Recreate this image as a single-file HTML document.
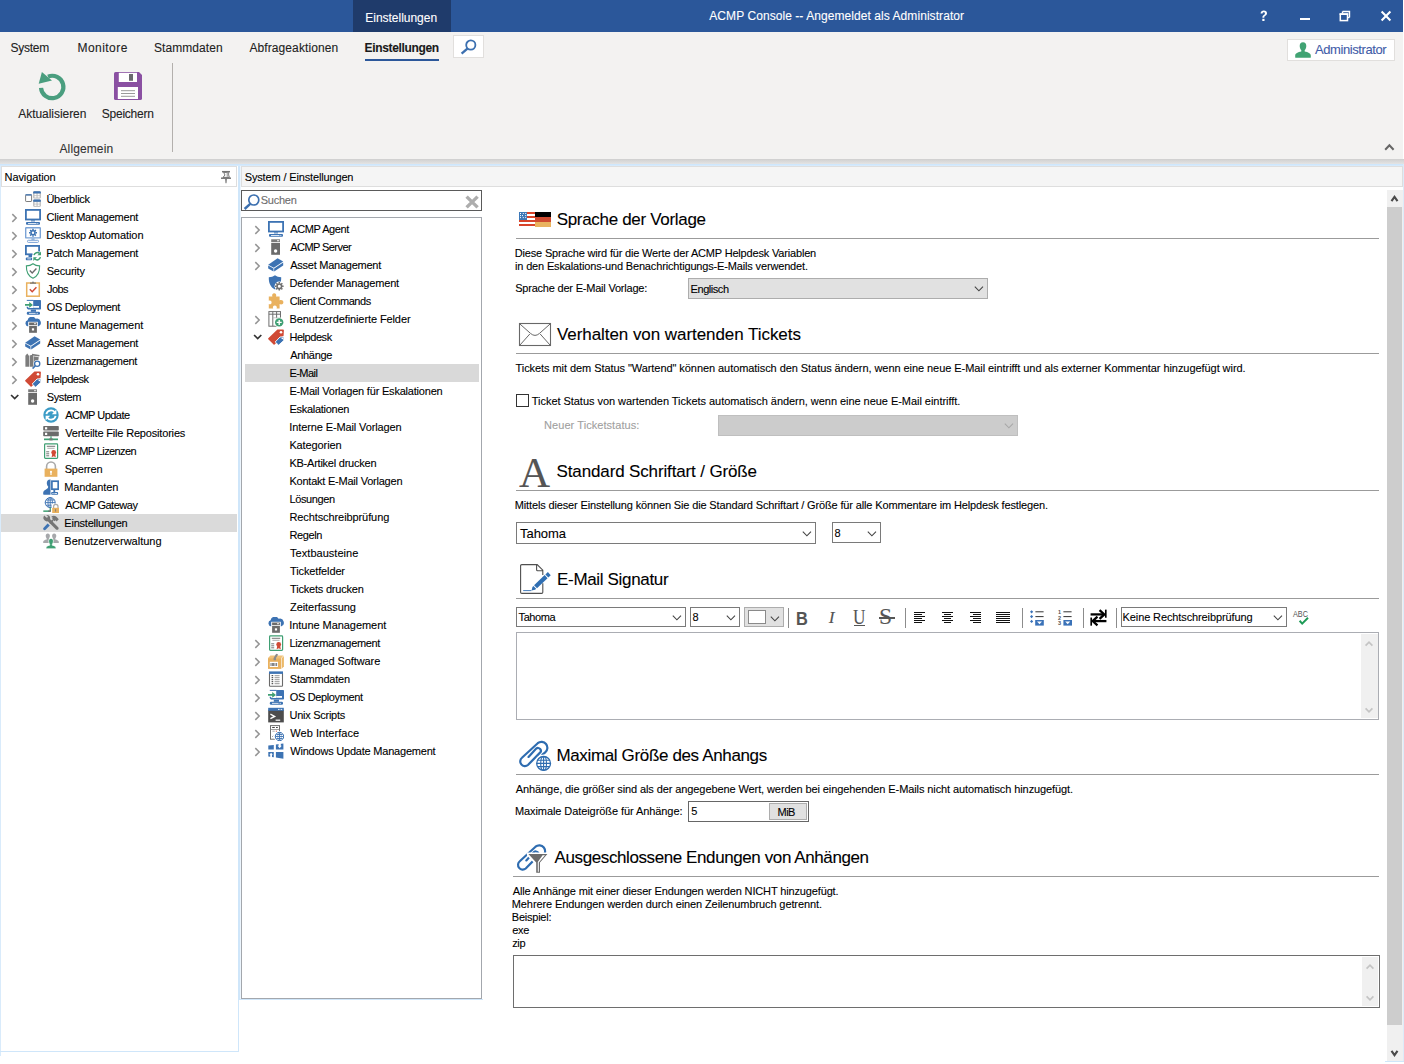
<!DOCTYPE html>
<html lang="de">
<head>
<meta charset="utf-8">
<title>ACMP Console -- Angemeldet als Administrator</title>
<style>
*{box-sizing:border-box;margin:0;padding:0}
html,body{width:1404px;height:1064px;overflow:hidden;background:#fff}
body{font-family:"Liberation Sans",sans-serif;font-size:11px;color:#000;position:relative}
.a{position:absolute}
.t{position:absolute;white-space:pre;-webkit-text-stroke:0.1px}
svg{position:absolute;overflow:visible}
.i{width:16px;height:16px}
.hr{position:absolute;height:1px;background:#9b9b9b}
.cb{position:absolute;border:1px solid #7a7a7a;background:#fff}
.sep{position:absolute;width:1px;background:#8c8c8c}
</style>
</head>
<body>
<svg width="0" height="0" style="left:0;top:0"><defs>
<symbol id="chr" viewBox="0 0 7 10"><path d="M1.3 1.1 L5.2 5 L1.3 8.9" fill="none" stroke="#949494" stroke-width="1.5"/></symbol>
<symbol id="chd" viewBox="0 0 10 7"><path d="M1.1 1 L4.7 4.6 L8.3 1" fill="none" stroke="#333" stroke-width="1.7"/></symbol>
<symbol id="overview" viewBox="0 0 16 16"><rect x="0.6" y="3.9" width="6" height="6.6" rx="0.6" fill="#fff" stroke="#7d7d7d" stroke-width="1"/><rect x="0.3" y="3.3" width="6.6" height="1.3" rx="0.5" fill="#3d73b3"/><rect x="8.2" y="0.2" width="7.6" height="7.4" rx="1" fill="#b4b4b4"/><path d="M8.2 2.4V1.2Q8.2 0.2 9.2 0.2H14.8Q15.8 0.2 15.8 1.2V2.4Z" fill="#3d73b3"/><rect x="9.4" y="2.7" width="2.2" height="1.7" fill="#fff"/><rect x="12.5" y="2.7" width="2.2" height="1.7" fill="#fff"/><rect x="9.4" y="5.1" width="2.2" height="1.5" fill="#fff"/><rect x="12.5" y="5.1" width="2.2" height="1.5" fill="#fff"/><rect x="8.2" y="8.6" width="7.6" height="7.2" rx="1" fill="#b4b4b4"/><path d="M8.2 10.8V9.6Q8.2 8.6 9.2 8.6H14.8Q15.8 8.6 15.8 9.6V10.8Z" fill="#3d73b3"/><rect x="9.4" y="11.1" width="2.2" height="1.6" fill="#fff"/><rect x="12.5" y="11.1" width="2.2" height="1.6" fill="#fff"/><rect x="9.4" y="13.4" width="2.2" height="1.5" fill="#fff"/><rect x="12.5" y="13.4" width="2.2" height="1.5" fill="#fff"/></symbol>
<symbol id="monitor" viewBox="0 0 16 16"><rect x="0.9" y="0.9" width="14.2" height="9.6" fill="#fff" stroke="#3d73b3" stroke-width="1.8"/><path d="M6 11.4h4v1H6z" fill="#3d73b3"/><rect x="1" y="13.1" width="14" height="2.6" rx="0.9" fill="#3d73b3"/><rect x="3" y="14" width="8.5" height="0.8" fill="#fff"/><rect x="12.3" y="14" width="1" height="0.8" fill="#fff"/></symbol>
<symbol id="deskauto" viewBox="0 0 16 16"><rect x="0.7" y="0.7" width="14.6" height="10.2" rx="0.5" fill="#fff" stroke="#7ba3d6" stroke-width="1.4"/><path d="M6.4 11.4h3.2v1.4h-3.2z" fill="#7ba3d6"/><rect x="2.5" y="13.3" width="11" height="2.1" rx="0.8" fill="#fff" stroke="#7ba3d6" stroke-width="1"/><g transform="translate(8 5.8)"><circle r="2.7" fill="#3d73b3"/><g stroke="#3d73b3" stroke-width="1.5"><path d="M0 -4V-2.4M0 4V2.4M-4 0H-2.4M4 0H2.4M-2.85 -2.85L-1.7 -1.7M2.85 2.85L1.7 1.7M-2.85 2.85L-1.7 1.7M2.85 -2.85L1.7 -1.7"/></g><circle r="1.2" fill="#fff"/></g></symbol>
<symbol id="patch" viewBox="0 0 16 16"><rect x="0.9" y="0.9" width="13.2" height="8.4" fill="#fff" stroke="#3d73b3" stroke-width="1.8"/><path d="M3.5 10h3.5v2H3.5z" fill="#3d73b3"/><rect x="0.8" y="12.6" width="6.4" height="2.6" rx="0.8" fill="#3d73b3"/><rect x="2.3" y="13.5" width="3.6" height="0.8" fill="#fff"/><rect x="7.5" y="6.5" width="8.5" height="9.5" fill="#fff"/><path d="M9 10.2A3.4 3.4 0 0 1 14.6 8.4" fill="none" stroke="#3f9f73" stroke-width="1.5"/><path d="M16 6.6V10.2H12.4z" fill="#3f9f73"/><path d="M15.4 12.2A3.4 3.4 0 0 1 9.8 14" fill="none" stroke="#3f9f73" stroke-width="1.5"/><path d="M8.3 15.9V12.2H12z" fill="#3f9f73"/></symbol>
<symbol id="shield" viewBox="0 0 16 16"><path d="M8 0.8C6.2 2.2 3.8 2.9 1.4 2.9C1.2 8.5 3.2 13 8 15.2C12.8 13 14.8 8.5 14.6 2.9C12.2 2.9 9.8 2.2 8 0.8Z" fill="#fff" stroke="#3f9f73" stroke-width="1.1"/><path d="M4.8 7.6L7.2 10L11.4 5.6" fill="none" stroke="#6a6a6a" stroke-width="1.4"/></symbol>
<symbol id="jobs" viewBox="0 0 16 16"><rect x="1.7" y="2" width="12.6" height="13.2" fill="#fff" stroke="#e9b15e" stroke-width="1.5"/><path d="M5 2.8V1.4H6.8L8 0.2L9.2 1.4H11V2.8Z" fill="#7a7a7a"/><path d="M4.8 8.3L7.2 10.7L11.4 6.2" fill="none" stroke="#d04a35" stroke-width="1.5"/></symbol>
<symbol id="osdeploy" viewBox="0 0 16 16"><path d="M8.2 0.9H15.2Q16 0.9 16 1.7V9.8Q16 10.6 15.2 10.6H4.2Q1.6 10.6 1.6 7.8H2.8Q2.8 8.9 4.2 8.9H8.2Z" fill="#3d73b3"/><path d="M1.8 1.4H8.4" stroke="#3d73b3" stroke-width="1"/><rect x="8.2" y="7" width="5.8" height="1.8" fill="#fff"/><path d="M0 5H4.2V3L8 5.9L4.2 8.8V6.8H0Z" fill="#3f9f73"/><path d="M5.8 10.6h5.2v2.2h-5.2z" fill="#3d73b3"/><rect x="1.8" y="12.7" width="13.2" height="3.1" rx="1.2" fill="#3d73b3"/><rect x="4" y="13.9" width="6.6" height="0.8" fill="#fff"/><rect x="11.6" y="13.9" width="1.2" height="0.8" fill="#fff"/></symbol>
<symbol id="intune" viewBox="0 0 16 16"><path d="M3.3 9.5A3.2 3.2 0 0 1 2.6 3.3A4.3 4.3 0 0 1 10.6 1.8A3.9 3.9 0 0 1 13 9.5Z" fill="#3d73b3"/><rect x="3.2" y="4.8" width="9.6" height="11.2" fill="#fff"/><rect x="4.1" y="5.5" width="7.8" height="2.5" fill="#6b6b6b"/><rect x="9" y="6.3" width="2" height="0.9" fill="#fff"/><rect x="4.1" y="8.8" width="7.8" height="7" fill="#6b6b6b"/><rect x="6.9" y="11.3" width="2.2" height="2.2" fill="#fff"/></symbol>
<symbol id="asset" viewBox="0 0 16 16"><path d="M0.2 7.8L9.6 1.2L15.2 4.6L5.8 10.8Z" fill="#3d73b3"/><path d="M0.2 8.5L5.5 11.5V14.4L0.2 11.4Z" fill="#3d73b3"/><path d="M6.2 11.5L15.2 5.4V8.6L6.2 14.4Z" fill="#3d73b3"/></symbol>
<symbol id="lizenzmgmt" viewBox="0 0 16 16"><path d="M0.4 2.8L2.2 0.6L4 2.8V13.8H0.4Z" fill="#7c7c7c"/><path d="M4.6 2.4L8.2 1.4V13.8H4.6Z" fill="#7c7c7c"/><path d="M7 0.7L14.6 2.1L14.2 3.5L7 2.4ZM8.6 3.2L13.8 4.2L13 9L9.4 13.8H8.6Z" fill="#7c7c7c"/><circle cx="12.2" cy="10.7" r="3.6" fill="#fff"/><circle cx="12.2" cy="10.7" r="2.6" fill="#fff" stroke="#3d73b3" stroke-width="1.3"/><path d="M10.3 12.7L7.6 15.6" stroke="#3d73b3" stroke-width="1.6"/></symbol>
<symbol id="helpdesk" viewBox="0 0 16 16"><path d="M0.3 9.3L9.4 0.6L15 0.4C15.6 0.4 15.9 0.7 15.9 1.3L15.6 6.7L6.6 15.4C6.3 15.7 5.9 15.7 5.6 15.4L0.3 10.2C0 9.9 0 9.6 0.3 9.3Z" fill="#d04a35"/><circle cx="13" cy="3.2" r="1.3" fill="#fff"/><path d="M7.2 13L12 8L15.9 7.7L15.7 11.6L10.6 16.2L7.2 13Z" fill="#3d73b3" stroke="#fff" stroke-width="0.9"/><circle cx="14.3" cy="9.4" r="0.8" fill="#fff"/></symbol>
<symbol id="server" viewBox="0 0 16 16"><rect x="3.2" y="0.3" width="8.8" height="2.9" fill="#7a7a7a"/><rect x="9" y="1.3" width="2.2" height="0.9" fill="#fff"/><rect x="3.2" y="4" width="8.8" height="11.8" fill="#6b6b6b"/><circle cx="7.6" cy="12" r="1.7" fill="#fff"/></symbol>
<symbol id="update" viewBox="0 0 16 16"><circle cx="8" cy="8" r="7.7" fill="#3c9cc6"/><path d="M3.4 7.2A4.7 4.7 0 0 1 11.6 5" fill="none" stroke="#fff" stroke-width="1.8"/><path d="M13.4 2.6V7.2H8.8Z" fill="#fff"/><path d="M12.6 8.8A4.7 4.7 0 0 1 4.4 11" fill="none" stroke="#fff" stroke-width="1.8"/><path d="M2.6 13.4V8.8H7.2Z" fill="#fff"/></symbol>
<symbol id="filerepo" viewBox="0 0 16 16"><rect x="0.2" y="1" width="15.6" height="4.6" rx="0.8" fill="#6b6b6b"/><rect x="2" y="2.2" width="2.2" height="2.2" fill="#fff"/><rect x="0.2" y="6.6" width="15.6" height="4.6" rx="0.8" fill="#6b6b6b"/><rect x="2" y="7.8" width="2.2" height="2.2" fill="#fff"/><rect x="7.4" y="11.2" width="1.2" height="2.6" fill="#3f9f73"/><rect x="1" y="13.5" width="14" height="1.7" fill="#3f9f73"/><rect x="6.4" y="13.3" width="3.2" height="2.1" fill="#777"/></symbol>
<symbol id="cert" viewBox="0 0 16 16"><rect x="1.6" y="0.9" width="13" height="14.4" rx="0.8" fill="#fff" stroke="#3f9f73" stroke-width="1.2"/><path d="M3.8 3.3H12.2" stroke="#666" stroke-width="0.9"/><path d="M4.4 5.3H11.6" stroke="#999" stroke-width="0.8"/><path d="M3.2 8.8H6.2M3.2 10.8H6.2M3.2 12.8H6.2" stroke="#666" stroke-width="0.9"/><circle cx="10.7" cy="9.4" r="2.4" fill="#d04a35"/><path d="M9.2 11L8.6 14.2L10.7 13.2L12.8 14.2L12.2 11Z" fill="#d04a35"/></symbol>
<symbol id="lock" viewBox="0 0 16 16"><path d="M3.6 8V5.4A4.4 4.4 0 0 1 12.4 5.4V8" fill="none" stroke="#a9a9a9" stroke-width="1.6"/><rect x="1.6" y="7.6" width="12.8" height="8.2" fill="#e9b15e"/><circle cx="8" cy="10.8" r="1.1" fill="#fff"/><rect x="7.4" y="11" width="1.2" height="3" fill="#fff"/></symbol>
<symbol id="mandant" viewBox="0 0 16 16"><path d="M7.5 0.4C5 0.2 3.8 2 3.8 4C3.8 5.6 4.4 6.8 5.2 7.6C5.2 9 4.6 9.8 3 10.4C1 11.1 0.2 12.4 0.2 14V15.1Q0.2 15.7 0.8 15.7H7.5Z" fill="#3d73b3"/><rect x="8.9" y="2.2" width="6.3" height="8" fill="#fff" stroke="#3d73b3" stroke-width="1.7"/><path d="M10.4 11h1.8v2.2h-1.8z" fill="#3d73b3"/><rect x="8.2" y="13.1" width="6.9" height="2.6" rx="0.8" fill="#3d73b3"/><rect x="9.4" y="14" width="1.2" height="0.8" fill="#fff"/><rect x="11.4" y="14" width="2.6" height="0.8" fill="#fff"/></symbol>
<symbol id="gateway" viewBox="0 0 16 16"><circle cx="7.2" cy="5.6" r="5" fill="#fff" stroke="#3d73b3" stroke-width="1"/><ellipse cx="7.2" cy="5.6" rx="2.2" ry="5" fill="none" stroke="#3d73b3" stroke-width="0.9"/><path d="M7.2 0.6V10.6M2.2 5.6H12.2M3 3H11.4M3 8.2H11.4" stroke="#3d73b3" stroke-width="0.9" fill="none"/><rect x="6.6" y="10.6" width="1.3" height="3.4" fill="#3f9f73"/><rect x="0.3" y="13.4" width="6" height="1.5" fill="#3f9f73"/><rect x="5.4" y="13.4" width="2.5" height="1.5" fill="#666"/><rect x="8.6" y="6.6" width="7.4" height="9.4" fill="#fff"/><path d="M10.6 11V9.6A2.2 2.2 0 0 1 15 9.6V11" fill="none" stroke="#a9a9a9" stroke-width="1.2"/><rect x="9.2" y="10.8" width="6.8" height="5.2" fill="#e9b15e"/><rect x="12.2" y="12.2" width="0.9" height="2.4" fill="#7a7a7a"/></symbol>
<symbol id="tools" viewBox="0 0 16 16"><g fill="#757575"><path d="M8.6 1.2C10.4 0.2 12.2 0.6 13.4 1.8L15.8 4.2L13.6 6.4L12.4 5.2L11.4 6.2L9 3.8L10 2.8C9.6 2.4 9.2 2.2 8.6 2.2Z"/><path d="M9.2 4.6L11 6.4L4.4 13L2.6 11.2Z" fill="none"/><path d="M0.4 3.4C0.2 2.4 0.6 1.4 1.4 0.6L3.2 2.6L4.6 2.4L4.8 1L3.2 0.2C4.4 -0.2 5.6 0.2 6.4 1C7.2 1.8 7.4 3 7 4L15.2 12.2C15.8 12.8 15.8 13.8 15.2 14.4C14.6 15 13.6 15 13 14.4L4.8 6.2C3.8 6.6 2.6 6.4 1.8 5.6C1 4.8 0.6 4.2 0.4 3.4Z"/></g><path d="M9.4 4.6L10.6 5.8L7.4 9L6.2 7.8Z" fill="#757575"/><path d="M4.6 8.4L6.8 10.6L2.6 14.8C2 15.4 1 15.4 0.6 14.8C0 14.2 0 13.4 0.6 12.8Z" fill="#3d73b3"/></symbol>
<symbol id="users" viewBox="0 0 16 16"><g fill="#a6a8ab"><path d="M4.8 0.4C6.2 0.4 6.9 1.4 6.9 2.8C6.9 4 6.4 4.9 5.9 5.4V6.4C7.6 6.8 8.6 7.6 8.6 8.8V10H0.2V8.8C0.2 7.6 1.6 6.8 3.7 6.4V5.4C3.2 4.9 2.7 4 2.7 2.8C2.7 1.4 3.4 0.4 4.8 0.4Z"/><path d="M11.2 0.4C12.6 0.4 13.3 1.4 13.3 2.8C13.3 4 12.8 4.9 12.3 5.4V6.4C14.4 6.8 15.8 7.6 15.8 8.8V10H7.4V8.8C7.4 7.6 8.4 6.8 10.1 6.4V5.4C9.6 4.9 9.1 4 9.1 2.8C9.1 1.4 9.8 0.4 11.2 0.4Z"/></g><path d="M8 5.4C9.6 5.4 10.4 6.6 10.4 8.2C10.4 9.6 9.8 10.6 9.3 11.2V12.2C11.4 12.6 13 13.4 13 14.8V15.8H3V14.8C3 13.4 4.6 12.6 6.7 12.2V11.2C6.2 10.6 5.6 9.6 5.6 8.2C5.6 6.6 6.4 5.4 8 5.4Z" fill="#3f9f73" stroke="#fff" stroke-width="0.7"/></symbol>
<symbol id="defender" viewBox="0 0 16 16"><path d="M7 0.3C5.4 1.6 3.2 2.3 0.8 2.3C0.6 7.8 2.4 12.2 7 14.6C11.6 12.2 13.4 7.8 13.2 2.3C10.8 2.3 8.6 1.6 7 0.3Z" fill="#3d73b3"/><circle cx="11.3" cy="11.3" r="4.7" fill="#fff"/><g transform="translate(11.3 11.3)"><circle r="2.3" fill="none" stroke="#6e6e6e" stroke-width="1.6"/><g stroke="#6e6e6e" stroke-width="1.5"><path d="M0 -4.3V-2.8M0 4.3V2.8M-4.3 0H-2.8M4.3 0H2.8M-3.05 -3.05L-2 -2M3.05 3.05L2 2M-3.05 3.05L-2 2M3.05 -3.05L2 -2"/></g></g></symbol>
<symbol id="puzzle" viewBox="0 0 16 16"><path d="M4.4 3.6C3.6 2 4.6 0.3 6.2 0.3C7.8 0.3 8.8 2 8 3.6H11.6V7.4C13.2 6.4 15.4 7.2 15.4 9.2C15.4 11.2 13.2 12 11.6 11V15.4H8.6C9.4 13.8 8.4 12.4 6.8 12.4C5.2 12.4 4.4 13.8 5.2 15.4H0.8V11C2.4 11.8 3.6 10.8 3.6 9.4C3.6 8 2.4 7 0.8 7.8V3.6Z" fill="#e9b15e"/></symbol>
<symbol id="fields" viewBox="0 0 16 16"><rect x="0.9" y="0.6" width="11.6" height="14.6" fill="#fff" stroke="#6e6e6e" stroke-width="1"/><path d="M0.9 3.2H12.5M4.8 0.6V15.2M8.6 0.6V9" stroke="#6e6e6e" stroke-width="1" fill="none"/><path d="M4.8 6.8H12.5" stroke="#b5b5b5" stroke-width="0.8" fill="none"/><circle cx="11.2" cy="11.4" r="5" fill="#fff"/><circle cx="11.2" cy="11.4" r="4.2" fill="#3f9f73"/><path d="M11.2 8.9V13.9M8.7 11.4H13.7" stroke="#fff" stroke-width="1.4"/></symbol>
<symbol id="package" viewBox="0 0 16 16"><path d="M0 5.1L2.4 2.6H15.6L13.3 5.1Z" fill="#f0c27a"/><rect x="0" y="5.1" width="13.3" height="10.8" fill="#e9b15e"/><path d="M13.9 5L15.9 2.9V13.5L13.9 15.6Z" fill="#ecb968"/><path d="M8.2 0.8L10.2 1.4L8 5.1V7.2H5.6V5.1Z" fill="#8c8c8c"/><rect x="1.8" y="8.8" width="8.2" height="5.2" fill="#fff"/><path d="M3 10V13M4.4 10V13M5.6 10V13M7 10V13M8.6 10V13" stroke="#555" stroke-width="0.8"/></symbol>
<symbol id="stamm" viewBox="0 0 16 16"><rect x="1.5" y="1.5" width="13" height="13.8" rx="0.6" fill="#fff" stroke="#6a6a6a" stroke-width="1.1"/><rect x="1" y="0.4" width="14" height="2.5" fill="#3d73b3"/><path d="M3.6 4.7H5.2M3.6 6.7H5.2M3.6 8.7H5.2M3.6 10.7H5.2M3.6 12.7H5.2" stroke="#333" stroke-width="1"/><path d="M6.6 4.7H11.6M6.6 6.7H11.6M6.6 8.7H11.6M6.6 10.7H11.6M6.6 12.7H11.6" stroke="#8a8a8a" stroke-width="0.9"/></symbol>
<symbol id="unix" viewBox="0 0 16 16"><rect x="0.2" y="2.8" width="15.6" height="12.6" fill="#4d4d4d"/><rect x="0.2" y="0.8" width="15.6" height="3" fill="#3d73b3"/><rect x="10" y="1.9" width="1.6" height="0.9" fill="#fff"/><rect x="12.6" y="1.9" width="1.6" height="0.9" fill="#fff"/><path d="M2.4 7.2L6.6 9.4L2.4 11.6" fill="none" stroke="#fff" stroke-width="1.4"/><rect x="7.6" y="12.6" width="4.6" height="1.2" fill="#fff"/></symbol>
<symbol id="webif" viewBox="0 0 16 16"><rect x="2.5" y="0.6" width="9" height="13.6" fill="#fff" stroke="#6e6e6e" stroke-width="1"/><path d="M2.5 4.5H11.5" stroke="#8a8a8a" stroke-width="0.8"/><path d="M4.2 2.5H6.8M8 2.5H9.8" stroke="#444" stroke-width="1"/><path d="M4.4 6.2H6.8" stroke="#999" stroke-width="0.8"/><rect x="7.8" y="5.7" width="1.1" height="1" fill="#d04a35"/><path d="M4.2 11.8L5.2 10.8" stroke="#777" stroke-width="0.8"/><circle cx="11.5" cy="11.5" r="5.5" fill="#fff"/><circle cx="11.5" cy="11.5" r="4.2" fill="#fff" stroke="#3d73b3" stroke-width="1"/><path d="M11.5 7.3V15.7M7.3 11.5H15.7M8.4 9.5H14.6M8.4 13.5H14.6" stroke="#3d73b3" stroke-width="0.9" fill="none"/><path d="M10.6 7.9Q8.2 11.5 10.6 15.1M12.4 7.9Q14.8 11.5 12.4 15.1" stroke="#3d73b3" stroke-width="0.8" stroke-opacity="0.55" fill="none"/></symbol>
<symbol id="winupd" viewBox="0 0 16 16"><path d="M0.3 2.6L5.8 2V6.6H0.3Z" fill="#3d73b3"/><path d="M7.9 1.6L15.4 0.4V6.6H7.9Z" fill="#3d73b3"/><path d="M0.3 8.9H5.8V14.2L0.3 13.6Z" fill="#3d73b3"/><path d="M7.9 8.9H15.4V15.8L7.9 14.6Z" fill="#3d73b3"/><path d="M10.6 0.2H12.8V2.8H13.8L11.7 5.2L9.6 2.8H10.6Z" fill="#fff"/><path d="M2.2 14.4V11.8H1.4L3.1 9.8L4.8 11.8H4V14.4Z" fill="#fff"/></symbol>

</defs></svg>
<!-- title bar -->
<div class="a" style="left:0px;top:0px;width:1403px;height:32px;background:#2b579a;"></div>
<div class="a" style="left:353px;top:0px;width:98px;height:32px;background:#1f3b6b;"></div>
<!-- ribbon -->
<div class="a" style="left:0px;top:32px;width:1403px;height:127px;background:#f3f2f1;"></div>
<div class="a" style="left:0px;top:159px;width:1404px;height:5px;background:linear-gradient(#cfcfcf,#e4e4e4);"></div>
<div class="a" style="left:0px;top:164px;width:1404px;height:3px;background:linear-gradient(#cae4fb,#e3f0fc);"></div>
<div class="a" style="left:0px;top:166px;width:1px;height:890px;background:#d9ebfb;"></div>
<div class="a" style="left:238px;top:166px;width:3px;height:834px;background:linear-gradient(90deg,#cfe6fa 0,#cfe6fa 66%,#ecf5fd 66%);"></div>
<div class="a" style="left:1403px;top:164px;width:1px;height:898px;background:#dcecfa;"></div>
<div class="a" style="left:0px;top:1051px;width:238.5px;height:1px;background:#cfe6fa;"></div>
<div class="a" style="left:1385px;top:1061px;width:19px;height:1px;background:#cfe6fa;"></div>
<div class="a" style="left:365px;top:58.7px;width:74px;height:2.5px;background:#2b579a;"></div>
<div class="a" style="left:453px;top:35px;width:30.5px;height:22.5px;background:#fff;border:1px solid #e1dfdd;"></div>
<div class="a" style="left:172px;top:63px;width:1px;height:89px;background:#b3b0ad;"></div>
<div class="a" style="left:1287px;top:39px;width:107.5px;height:22px;background:#fff;border:1px solid #e1dfdd;"></div>
<!-- nav panel -->
<div class="a" style="left:1px;top:166px;width:237px;height:885px;background:#fff;"></div>
<div class="a" style="left:1px;top:166px;width:236px;height:21px;background:#fff;border:1px solid #dedede;"></div>
<div class="a" style="left:1px;top:514px;width:236px;height:18px;background:#dadada;"></div>
<svg style="left:25px;top:191px" width="16" height="16"><use href="#overview"/></svg>
<svg style="left:25px;top:209px" width="16" height="16"><use href="#monitor"/></svg>
<svg style="left:11.2px;top:212.5px" width="7" height="10"><use href="#chr"/></svg>
<svg style="left:25px;top:227px" width="16" height="16"><use href="#deskauto"/></svg>
<svg style="left:11.2px;top:230.5px" width="7" height="10"><use href="#chr"/></svg>
<svg style="left:25px;top:245px" width="16" height="16"><use href="#patch"/></svg>
<svg style="left:11.2px;top:248.5px" width="7" height="10"><use href="#chr"/></svg>
<svg style="left:25px;top:263px" width="16" height="16"><use href="#shield"/></svg>
<svg style="left:11.2px;top:266.5px" width="7" height="10"><use href="#chr"/></svg>
<svg style="left:25px;top:281px" width="16" height="16"><use href="#jobs"/></svg>
<svg style="left:11.2px;top:284.5px" width="7" height="10"><use href="#chr"/></svg>
<svg style="left:25px;top:299px" width="16" height="16"><use href="#osdeploy"/></svg>
<svg style="left:11.2px;top:302.5px" width="7" height="10"><use href="#chr"/></svg>
<svg style="left:25px;top:317px" width="16" height="16"><use href="#intune"/></svg>
<svg style="left:11.2px;top:320.5px" width="7" height="10"><use href="#chr"/></svg>
<svg style="left:25px;top:335px" width="16" height="16"><use href="#asset"/></svg>
<svg style="left:11.2px;top:338.5px" width="7" height="10"><use href="#chr"/></svg>
<svg style="left:25px;top:353px" width="16" height="16"><use href="#lizenzmgmt"/></svg>
<svg style="left:11.2px;top:356.5px" width="7" height="10"><use href="#chr"/></svg>
<svg style="left:25px;top:371px" width="16" height="16"><use href="#helpdesk"/></svg>
<svg style="left:11.2px;top:374.5px" width="7" height="10"><use href="#chr"/></svg>
<svg style="left:25px;top:389px" width="16" height="16"><use href="#server"/></svg>
<svg style="left:10px;top:394px" width="10" height="7"><use href="#chd"/></svg>
<svg style="left:43px;top:407px" width="16" height="16"><use href="#update"/></svg>
<svg style="left:43px;top:425px" width="16" height="16"><use href="#filerepo"/></svg>
<svg style="left:43px;top:443px" width="16" height="16"><use href="#cert"/></svg>
<svg style="left:43px;top:461px" width="16" height="16"><use href="#lock"/></svg>
<svg style="left:43px;top:479px" width="16" height="16"><use href="#mandant"/></svg>
<svg style="left:43px;top:497px" width="16" height="16"><use href="#gateway"/></svg>
<svg style="left:43px;top:515px" width="16" height="16"><use href="#tools"/></svg>
<svg style="left:43px;top:533px" width="16" height="16"><use href="#users"/></svg>
<!-- middle+content panel -->
<div class="a" style="left:241px;top:166px;width:1162px;height:895px;background:#fff;"></div>
<div class="a" style="left:241px;top:166px;width:1162px;height:21px;background:#f5f5f5;border:1px solid #dedede;"></div>
<div class="a" style="left:238px;top:999px;width:245px;height:1px;background:#cfe6fa;"></div>
<div class="a" style="left:238px;top:999px;width:1px;height:53px;background:#cfe6fa;"></div>
<div class="a" style="left:241px;top:190px;width:241px;height:21px;background:#fff;border:1px solid #5a5a5a;"></div>
<div class="a" style="left:241px;top:217px;width:241px;height:782px;background:#fff;border:1px solid #a3a7ad;"></div>
<div class="a" style="left:245px;top:364px;width:234px;height:18px;background:#d9d9d9;"></div>
<svg style="left:268px;top:221px" width="16" height="16"><use href="#monitor"/></svg>
<svg style="left:253.8px;top:224.5px" width="7" height="10"><use href="#chr"/></svg>
<svg style="left:268px;top:239px" width="16" height="16"><use href="#server"/></svg>
<svg style="left:253.8px;top:242.5px" width="7" height="10"><use href="#chr"/></svg>
<svg style="left:268px;top:257px" width="16" height="16"><use href="#asset"/></svg>
<svg style="left:253.8px;top:260.5px" width="7" height="10"><use href="#chr"/></svg>
<svg style="left:268px;top:275px" width="16" height="16"><use href="#defender"/></svg>
<svg style="left:268px;top:293px" width="16" height="16"><use href="#puzzle"/></svg>
<svg style="left:268px;top:311px" width="16" height="16"><use href="#fields"/></svg>
<svg style="left:253.8px;top:314.5px" width="7" height="10"><use href="#chr"/></svg>
<svg style="left:268px;top:329px" width="16" height="16"><use href="#helpdesk"/></svg>
<svg style="left:253px;top:334px" width="10" height="7"><use href="#chd"/></svg>
<svg style="left:268px;top:617px" width="16" height="16"><use href="#intune"/></svg>
<svg style="left:268px;top:635px" width="16" height="16"><use href="#cert"/></svg>
<svg style="left:253.8px;top:638.5px" width="7" height="10"><use href="#chr"/></svg>
<svg style="left:268px;top:653px" width="16" height="16"><use href="#package"/></svg>
<svg style="left:253.8px;top:656.5px" width="7" height="10"><use href="#chr"/></svg>
<svg style="left:268px;top:671px" width="16" height="16"><use href="#stamm"/></svg>
<svg style="left:253.8px;top:674.5px" width="7" height="10"><use href="#chr"/></svg>
<svg style="left:268px;top:689px" width="16" height="16"><use href="#osdeploy"/></svg>
<svg style="left:253.8px;top:692.5px" width="7" height="10"><use href="#chr"/></svg>
<svg style="left:268px;top:707px" width="16" height="16"><use href="#unix"/></svg>
<svg style="left:253.8px;top:710.5px" width="7" height="10"><use href="#chr"/></svg>
<svg style="left:268px;top:725px" width="16" height="16"><use href="#webif"/></svg>
<svg style="left:253.8px;top:728.5px" width="7" height="10"><use href="#chr"/></svg>
<svg style="left:268px;top:743px" width="16" height="16"><use href="#winupd"/></svg>
<svg style="left:253.8px;top:746.5px" width="7" height="10"><use href="#chr"/></svg>
<!-- content -->
<div class="hr" style="left:516px;top:238px;width:863px"></div>
<div class="hr" style="left:516px;top:353px;width:863px"></div>
<div class="hr" style="left:516px;top:490px;width:863px"></div>
<div class="hr" style="left:516px;top:598px;width:863px"></div>
<div class="hr" style="left:516px;top:774px;width:863px"></div>
<div class="hr" style="left:513px;top:876px;width:866px"></div>
<div class="a" style="left:688px;top:278px;width:300px;height:21px;background:#e1e1e1;border:1px solid #adadad;"></div>
<div class="a" style="left:516px;top:394px;width:13px;height:13px;background:#fff;border:1px solid #333;"></div>
<div class="a" style="left:718px;top:415px;width:300px;height:21px;background:#cccccc;border:1px solid #bfbfbf;"></div>
<div class="a" style="left:516px;top:522px;width:300px;height:22px;background:#fff;border:1px solid #7a7a7a;"></div>
<div class="a" style="left:832px;top:522px;width:49px;height:21px;background:#fff;border:1px solid #7a7a7a;"></div>
<div class="a" style="left:516px;top:607px;width:170px;height:20px;background:#fff;border:1px solid #7a7a7a;"></div>
<div class="a" style="left:690px;top:607px;width:50px;height:20px;background:#fff;border:1px solid #7a7a7a;"></div>
<div class="a" style="left:744px;top:607px;width:40px;height:20px;background:#e1e1e1;border:1px solid #adadad;"></div>
<div class="a" style="left:748px;top:610px;width:18px;height:14px;background:#fff;border:1px solid #8a8a8a;"></div>
<div class="a" style="left:788px;top:608px;width:1px;height:20px;background:#8c8c8c;"></div>
<div class="a" style="left:905px;top:608px;width:1px;height:20px;background:#8c8c8c;"></div>
<div class="a" style="left:1022px;top:608px;width:1px;height:20px;background:#8c8c8c;"></div>
<div class="a" style="left:1083px;top:608px;width:1px;height:20px;background:#8c8c8c;"></div>
<div class="a" style="left:1116px;top:608px;width:1px;height:20px;background:#8c8c8c;"></div>
<div class="a" style="left:1121px;top:607px;width:166px;height:20px;background:#fff;border:1px solid #7a7a7a;"></div>
<div class="a" style="left:516px;top:632px;width:863px;height:88px;background:#fff;border:1px solid #abadb3;"></div>
<div class="a" style="left:1361px;top:634px;width:17px;height:84px;background:#f0f0f0;"></div>
<div class="a" style="left:688px;top:801px;width:121px;height:21px;background:#fff;border:1px solid #666;"></div>
<div class="a" style="left:769px;top:803px;width:38px;height:17px;background:#e1e1e1;border:1px solid #adadad;"></div>
<div class="a" style="left:513px;top:955px;width:867px;height:53px;background:#fff;border:1px solid #6e6e6e;"></div>
<div class="a" style="left:1362px;top:957px;width:16px;height:49px;background:#f0f0f0;"></div>
<div class="a" style="left:1387px;top:190px;width:16px;height:871px;background:#f0f0f0;"></div>
<div class="a" style="left:1387px;top:207px;width:15px;height:818px;background:#cdcdcd;"></div>
<!-- ribbon icons -->
<svg style="left:36px;top:70px" width="32" height="32" viewBox="0 0 32 32"><path d="M12.00 6.62 A11.2 11.2 0 1 1 5.03 17.78" fill="none" stroke="#4a9e7f" stroke-width="4.2"/><path d="M5.9 2 L2.7 13.8 L16 10.4 Z" fill="#4a9e7f"/></svg>
<svg style="left:114px;top:72px" width="28" height="28" viewBox="0 0 28 28"><path d="M1.6 0H25L28 3V26.4Q28 28 26.4 28H1.6Q0 28 0 26.4V1.6Q0 0 1.6 0Z" fill="#8a50a2"/><rect x="4.8" y="0.8" width="18.2" height="9.2" fill="#fff"/><rect x="15" y="2" width="4" height="6.8" fill="#6a6a6e"/><rect x="3.8" y="15" width="20.2" height="12" fill="#fff"/><path d="M7 18.7H21M7 21.5H21M7 24.3H21" stroke="#9a9a9a" stroke-width="1"/></svg>
<svg style="left:458px;top:38px" width="20" height="18" viewBox="0 0 20 18"><circle cx="12.8" cy="7" r="4.6" fill="none" stroke="#3c70b0" stroke-width="1.8"/><path d="M9.4 10.6L3.6 15.6" stroke="#3c70b0" stroke-width="2.4"/></svg>
<svg style="left:1295px;top:42px" width="16" height="16" viewBox="0 0 16 16"><path d="M8 0.3C10.2 0.3 11.3 1.9 11.3 4.1C11.3 6 10.5 7.4 9.7 8.2V9.6C13 10.2 15.8 11.4 15.8 13.6V15.2Q15.8 15.8 15.2 15.8H0.8Q0.2 15.8 0.2 15.2V13.6C0.2 11.4 3 10.2 6.3 9.6V8.2C5.5 7.4 4.7 6 4.7 4.1C4.7 1.9 5.8 0.3 8 0.3Z" fill="#41a373"/></svg>
<svg style="left:1258px;top:9px" width="12" height="14" viewBox="0 0 12 14"><path d="M2.6 4.6C2.6 2.6 4 1.6 5.8 1.6C7.8 1.6 9 2.7 9 4.3C9 5.6 8.3 6.2 7.4 6.8C6.6 7.3 6.3 7.7 6.3 8.8H4.4C4.4 7.2 4.9 6.5 5.8 5.9C6.6 5.4 6.9 5.1 6.9 4.4C6.9 3.7 6.5 3.3 5.8 3.3C5 3.3 4.6 3.8 4.6 4.6Z" fill="#fff"/><rect x="4.3" y="9.8" width="2.2" height="2.2" fill="#fff"/></svg>
<div class="a" style="left:1300px;top:18px;width:9.5px;height:2px;background:#fff;"></div>
<svg style="left:1339px;top:10px" width="12" height="12" viewBox="0 0 12 12"><path d="M3.5 1.5H10.5V7.5" fill="none" stroke="#fff" stroke-width="1.4"/><path d="M3.5 1.5V3.5" stroke="#fff" stroke-width="1.4"/><path d="M10.5 7.5H8.5" stroke="#fff" stroke-width="1.4"/><rect x="1.3" y="4" width="7.2" height="6.6" fill="none" stroke="#fff" stroke-width="1.5"/><rect x="0.6" y="3.4" width="8.6" height="1.6" fill="#fff"/></svg>
<svg style="left:1380px;top:10px" width="12" height="12" viewBox="0 0 12 12"><path d="M1.6 1.6L10.4 10.4M10.4 1.6L1.6 10.4" stroke="#fff" stroke-width="2.1"/></svg>
<svg style="left:1383px;top:142px" width="12" height="10" viewBox="0 0 12 10"><path d="M2.2 7.8L6.4 3.3L10.6 7.8" fill="none" stroke="#666" stroke-width="2"/></svg>
<div class="a" style="left:1403px;top:0px;width:1px;height:157px;background:#fff;"></div>
<!-- small chrome icons -->
<svg style="left:220px;top:170px" width="12" height="14" viewBox="0 0 12 14"><path d="M2 1.7H10" stroke="#767676" stroke-width="1.5"/><path d="M3.6 2.4L5 5L3 7.4H9.4L8.6 5V2.4Z" fill="#fff" stroke="#767676" stroke-width="1"/><path d="M6.6 2.6H8.4V6.8H6.6Z" fill="#b0b0b0"/><path d="M1 8.2H11" stroke="#767676" stroke-width="1.5"/><path d="M5.4 9L6.6 9L6 13.2Z" fill="#767676" stroke="#767676" stroke-width="0.6"/></svg>
<svg style="left:242.6px;top:193px" width="18" height="18" viewBox="0 0 18 18"><circle cx="10.8" cy="7" r="5" fill="none" stroke="#3c70b0" stroke-width="1.7"/><path d="M7.2 10.8L1.6 16" stroke="#3c70b0" stroke-width="2.4"/></svg>
<svg style="left:464px;top:194px" width="16" height="16" viewBox="0 0 16 16"><path d="M2.6 2.6L13.6 13.4M13.6 2.6L2.6 13.4" stroke="#adadad" stroke-width="3.4"/></svg>
<svg style="left:974px;top:286px" width="10" height="6" viewBox="0 0 10 6"><path d="M0.8 0.7L4.9 4.8L9 0.7" fill="none" stroke="#444" stroke-width="1.1"/></svg>
<svg style="left:1004px;top:423px" width="10" height="6" viewBox="0 0 10 6"><path d="M0.8 0.7L4.9 4.8L9 0.7" fill="none" stroke="#a8a8a8" stroke-width="1.1"/></svg>
<svg style="left:802px;top:530.5px" width="10" height="6" viewBox="0 0 10 6"><path d="M0.8 0.7L4.9 4.8L9 0.7" fill="none" stroke="#444" stroke-width="1.1"/></svg>
<svg style="left:867px;top:530.5px" width="10" height="6" viewBox="0 0 10 6"><path d="M0.8 0.7L4.9 4.8L9 0.7" fill="none" stroke="#444" stroke-width="1.1"/></svg>
<svg style="left:672px;top:615px" width="10" height="6" viewBox="0 0 10 6"><path d="M0.8 0.7L4.9 4.8L9 0.7" fill="none" stroke="#444" stroke-width="1.1"/></svg>
<svg style="left:726px;top:615px" width="10" height="6" viewBox="0 0 10 6"><path d="M0.8 0.7L4.9 4.8L9 0.7" fill="none" stroke="#444" stroke-width="1.1"/></svg>
<svg style="left:770px;top:615.5px" width="10" height="6" viewBox="0 0 10 6"><path d="M0.8 0.7L4.9 4.8L9 0.7" fill="none" stroke="#444" stroke-width="1.1"/></svg>
<svg style="left:1273px;top:615px" width="10" height="6" viewBox="0 0 10 6"><path d="M0.8 0.7L4.9 4.8L9 0.7" fill="none" stroke="#444" stroke-width="1.1"/></svg>
<svg style="left:1389px;top:194px" width="12" height="10" viewBox="0 0 12 10"><path d="M2.5 7.2L5.5 2.9L8.5 7.2" fill="none" stroke="#4a4a4a" stroke-width="2.1" stroke-linejoin="miter"/></svg>
<svg style="left:1389px;top:1048px" width="12" height="10" viewBox="0 0 12 10"><path d="M2.5 2.8L5.5 7.1L8.5 2.8" fill="none" stroke="#4a4a4a" stroke-width="2.1" stroke-linejoin="miter"/></svg>
<svg style="left:1364px;top:639.5px" width="10" height="7" viewBox="0 0 10 7"><path d="M1.6 5.6L5 2.2L8.4 5.6" fill="none" stroke="#c4c4c4" stroke-width="1.7"/></svg>
<svg style="left:1364px;top:706.5px" width="10" height="7" viewBox="0 0 10 7"><path d="M1.6 1.4L5 4.8L8.4 1.4" fill="none" stroke="#c4c4c4" stroke-width="1.7"/></svg>
<svg style="left:1365px;top:962.5px" width="10" height="7" viewBox="0 0 10 7"><path d="M1.6 5.6L5 2.2L8.4 5.6" fill="none" stroke="#c4c4c4" stroke-width="1.7"/></svg>
<svg style="left:1365px;top:995px" width="10" height="7" viewBox="0 0 10 7"><path d="M1.6 1.4L5 4.8L8.4 1.4" fill="none" stroke="#c4c4c4" stroke-width="1.7"/></svg>
<!-- section icons -->
<svg style="left:519px;top:212px" width="32" height="15" viewBox="0 0 32 15"><rect x="0" y="0" width="16" height="2" fill="#d8432a"/><rect x="0" y="4" width="16" height="2" fill="#d8432a"/><rect x="0" y="8" width="16" height="2" fill="#d8432a"/><rect x="0" y="12" width="16" height="2" fill="#d8432a"/><rect x="0" y="0" width="8" height="8" fill="#3c78b8"/><rect x="1" y="1" width="1" height="1" fill="#fff"/><rect x="3.8" y="1" width="1" height="1" fill="#fff"/><rect x="6.2" y="1" width="1" height="1" fill="#fff"/><rect x="1" y="3.1" width="1" height="1" fill="#fff"/><rect x="3" y="3.1" width="1" height="1" fill="#fff"/><rect x="6.2" y="3.1" width="1" height="1" fill="#fff"/><rect x="1" y="5.1" width="1" height="1" fill="#fff"/><rect x="3.8" y="5.1" width="1" height="1" fill="#fff"/><rect x="6.2" y="5.1" width="1" height="1" fill="#fff"/><rect x="16" y="0" width="16" height="5" fill="#000"/><rect x="16" y="5" width="16" height="5" fill="#cf4a30"/><rect x="16" y="10" width="16" height="5" fill="#e9b35f"/></svg>
<svg style="left:519px;top:323px" width="32" height="23" viewBox="0 0 32 23"><rect x="0.5" y="0.5" width="31" height="22" fill="#fff" stroke="#686868" stroke-width="1.1"/><path d="M0.8 0.9L11.5 10.4Q16 14.4 20.5 10.4L31.2 0.9" fill="none" stroke="#686868" stroke-width="1"/><path d="M1 22L10.8 11M31 22L21.2 11" fill="none" stroke="#686868" stroke-width="1"/></svg>
<svg style="left:519px;top:563px" width="33" height="32" viewBox="0 0 33 32"><path d="M17.6 1.6H2.8Q1.6 1.6 1.6 2.8V29.2Q1.6 30.4 2.8 30.4H22.6Q23.8 30.4 23.8 29.2V20.2M23.8 12V7.2L18.2 1.6H17.6V6.8Q17.6 7.8 18.6 7.8H23.8" fill="none" stroke="#4f4f4f" stroke-width="1.1"/><path d="M4.2 27.6H12.4" stroke="#2f6eb2" stroke-width="0.9"/><g transform="translate(12.6 27.4) rotate(-43.5)"><path d="M0 0L3 -1.9H4.4V1.9H3Z" fill="#2f6eb2"/><rect x="5.4" y="-2.1" width="14.6" height="4.2" fill="#2f6eb2"/><rect x="21" y="-2.1" width="3.4" height="4.2" fill="#2f6eb2"/></g></svg>
<svg style="left:517px;top:738px" width="36" height="36" viewBox="0 0 36 36"><g transform="translate(7.8 23.5) rotate(-39.5)"><path d="M18 5.9L21.6 5.9A5.9 5.9 0 0 0 21.6 -5.9L0.2 -4.7A4.7 4.7 0 0 0 0.2 4.7L17 2.9A2.8 2.8 0 0 0 17 -2.7L5.8 -1.2" fill="none" stroke="#2e6cb0" stroke-width="2.2" stroke-linecap="round"/></g><circle cx="26.6" cy="25.4" r="9" fill="#fff"/><circle cx="26.6" cy="25.4" r="6.9" fill="#fff" stroke="#2e6cb0" stroke-width="1.3"/><ellipse cx="26.6" cy="25.4" rx="2.9" ry="6.9" fill="none" stroke="#2e6cb0" stroke-width="1.1"/><path d="M26.6 18.5V32.3M19.7 25.4H33.5M20.6 22.2H32.6M20.6 28.6H32.6" stroke="#2e6cb0" stroke-width="1.1" fill="none"/></svg>
<svg style="left:515px;top:841px" width="36" height="36" viewBox="0 0 36 36"><g transform="translate(7.6 24) rotate(-39.5)"><path d="M18 5.9L21.6 5.9A5.9 5.9 0 0 0 21.6 -5.9L0.2 -4.7A4.7 4.7 0 0 0 0.2 4.7L17 2.9A2.8 2.8 0 0 0 17 -2.7L5.8 -1.2" fill="none" stroke="#2e6cb0" stroke-width="2.2" stroke-linecap="round"/></g><path d="M11.5 11.6H33.8V14.4L26.4 22.6V33.4H19.6V22.6L12 14.6Z" fill="#fff"/><path d="M13.4 13H32.4L25 21.6V31.8H21.2V21.6Z" fill="#6b6b6b"/><path d="M27.6 14.2H30L23.8 21.4V30.8H22.8V21Z" fill="#fff"/></svg>
<!-- toolbar icons -->
<svg style="left:914px;top:612px" width="16" height="11" viewBox="0 0 16 11"><rect x="0" y="0" width="11" height="1" fill="#111"/><rect x="0" y="2" width="8" height="1" fill="#111"/><rect x="0" y="4" width="11" height="1" fill="#111"/><rect x="0" y="6" width="8" height="1" fill="#111"/><rect x="0" y="8" width="11" height="1" fill="#111"/><rect x="0" y="10" width="8" height="1" fill="#111"/></svg>
<svg style="left:942px;top:612px" width="16" height="11" viewBox="0 0 16 11"><rect x="0" y="0" width="11" height="1" fill="#111"/><rect x="2" y="2" width="7" height="1" fill="#111"/><rect x="0" y="4" width="11" height="1" fill="#111"/><rect x="2" y="6" width="7" height="1" fill="#111"/><rect x="0" y="8" width="11" height="1" fill="#111"/><rect x="2" y="10" width="7" height="1" fill="#111"/></svg>
<svg style="left:970px;top:612px" width="16" height="11" viewBox="0 0 16 11"><rect x="0" y="0" width="11" height="1" fill="#111"/><rect x="3" y="2" width="8" height="1" fill="#111"/><rect x="0" y="4" width="11" height="1" fill="#111"/><rect x="3" y="6" width="8" height="1" fill="#111"/><rect x="0" y="8" width="11" height="1" fill="#111"/><rect x="3" y="10" width="8" height="1" fill="#111"/></svg>
<svg style="left:996px;top:612px" width="16" height="11" viewBox="0 0 16 11"><rect x="0" y="0" width="14" height="1" fill="#111"/><rect x="0" y="2" width="14" height="1" fill="#111"/><rect x="0" y="4" width="14" height="1" fill="#111"/><rect x="0" y="6" width="14" height="1" fill="#111"/><rect x="0" y="8" width="14" height="1" fill="#111"/><rect x="0" y="10" width="14" height="1" fill="#111"/></svg>
<svg style="left:1030px;top:610px" width="14" height="16" viewBox="0 0 14 16"><path d="M1.6 0.2L3.2 1.8L1.6 3.4L0 1.8ZM1.6 5L3.2 6.6L1.6 8.2L0 6.6ZM1.6 9.8L3.2 11.4L1.6 13L0 11.4Z" fill="#3a72b8"/><path d="M5.4 1.8H13.6M5.4 6.6H13.6" stroke="#333" stroke-width="1"/><rect x="5.2" y="10" width="8.6" height="5.6" fill="#3a72b8"/><path d="M7 11.6H12L9.5 14.3Z" fill="#fff"/></svg>
<svg style="left:1057.5px;top:610px" width="15" height="16" viewBox="0 0 15 16"><text x="0" y="4" font-family="Liberation Sans" font-size="5.5" font-weight="bold" fill="#555">1</text><text x="0" y="9.6" font-family="Liberation Sans" font-size="5.5" font-weight="bold" fill="#555">2</text><text x="0" y="15.2" font-family="Liberation Sans" font-size="5.5" font-weight="bold" fill="#555">3</text><path d="M5.4 1.8H13.6M5.4 6.6H13.6" stroke="#333" stroke-width="1"/><rect x="5.4" y="10" width="8.6" height="5.6" fill="#3a72b8"/><path d="M7.2 11.6H12.2L9.7 14.3Z" fill="#fff"/></svg>
<svg style="left:1089.5px;top:609.3px" width="17" height="17.2" viewBox="0 0 16 16.5"><path d="M0.4 5.2H13.4" stroke="#000" stroke-width="2.2"/><path d="M9 1L13.6 5.2L9 9.4" fill="none" stroke="#000" stroke-width="2.2"/><path d="M15 0.6V8.4" stroke="#000" stroke-width="1.6"/><path d="M2.6 11.6H15.6" stroke="#000" stroke-width="2.2"/><path d="M7 7.4L2.4 11.6L7 15.8" fill="none" stroke="#000" stroke-width="2.2"/><path d="M1 8.2V16" stroke="#000" stroke-width="1.6"/></svg>
<svg style="left:1293px;top:610px" width="17" height="16" viewBox="0 0 17 16"><text x="0" y="7" font-family="Liberation Sans" font-size="9" fill="#555" textLength="15" lengthAdjust="spacingAndGlyphs">ABC</text><path d="M6.6 10.8L9.2 13.6L15 7.8" fill="none" stroke="#1e9b57" stroke-width="2"/></svg>
<div class="a" style="left:854px;top:625px;width:10.5px;height:1px;background:#555;"></div>
<div class="a" style="left:879px;top:617px;width:16px;height:2px;background:#555;"></div>
<!-- text -->
<div class="t" style="left:365.3px;top:12px;font-size:12px;line-height:12px;letter-spacing:-0.025px;color:#fff;">Einstellungen</div>
<div class="t" style="left:709.3px;top:10px;font-size:12px;line-height:12px;letter-spacing:0.066px;color:#fff;">ACMP Console -- Angemeldet als Administrator</div>
<div class="t" style="left:10.5px;top:42px;font-size:12px;line-height:12px;letter-spacing:-0.276px;color:#222;">System</div>
<div class="t" style="left:77.5px;top:42px;font-size:12px;line-height:12px;letter-spacing:0.447px;color:#222;">Monitore</div>
<div class="t" style="left:154.0px;top:42px;font-size:12px;line-height:12px;letter-spacing:0.064px;color:#222;">Stammdaten</div>
<div class="t" style="left:249.5px;top:42px;font-size:12px;line-height:12px;letter-spacing:0.085px;color:#222;">Abfrageaktionen</div>
<div class="t" style="left:364.5px;top:42px;font-size:12px;line-height:12px;letter-spacing:-0.337px;font-weight:bold;color:#1a1a1a;">Einstellungen</div>
<div class="t" style="left:18.3px;top:108px;font-size:12px;line-height:12px;letter-spacing:-0.050px;color:#222;">Aktualisieren</div>
<div class="t" style="left:101.8px;top:108px;font-size:12px;line-height:12px;letter-spacing:-0.240px;color:#222;">Speichern</div>
<div class="t" style="left:59.5px;top:143px;font-size:12px;line-height:12px;letter-spacing:0.112px;color:#333;">Allgemein</div>
<div class="t" style="left:1315.0px;top:43px;font-size:13px;line-height:13px;letter-spacing:-0.420px;color:#3f5ca8;">Administrator</div>
<div class="t" style="left:4.6px;top:172px;font-size:11px;line-height:11px;letter-spacing:-0.096px;">Navigation</div>
<div class="t" style="left:46.4px;top:194px;font-size:11px;line-height:11px;letter-spacing:-0.278px;">Überblick</div>
<div class="t" style="left:46.6px;top:212px;font-size:11px;line-height:11px;letter-spacing:-0.228px;">Client Management</div>
<div class="t" style="left:46.3px;top:230px;font-size:11px;line-height:11px;letter-spacing:-0.073px;">Desktop Automation</div>
<div class="t" style="left:46.3px;top:248px;font-size:11px;line-height:11px;letter-spacing:-0.221px;">Patch Management</div>
<div class="t" style="left:46.7px;top:266px;font-size:11px;line-height:11px;letter-spacing:-0.218px;">Security</div>
<div class="t" style="left:47.0px;top:284px;font-size:11px;line-height:11px;letter-spacing:-0.600px;">Jobs</div>
<div class="t" style="left:46.7px;top:302px;font-size:11px;line-height:11px;letter-spacing:-0.330px;">OS Deployment</div>
<div class="t" style="left:46.2px;top:320px;font-size:11px;line-height:11px;letter-spacing:-0.048px;">Intune Management</div>
<div class="t" style="left:47.2px;top:338px;font-size:11px;line-height:11px;letter-spacing:-0.239px;">Asset Management</div>
<div class="t" style="left:46.3px;top:356px;font-size:11px;line-height:11px;letter-spacing:-0.336px;">Lizenzmanagement</div>
<div class="t" style="left:46.3px;top:374px;font-size:11px;line-height:11px;letter-spacing:-0.439px;">Helpdesk</div>
<div class="t" style="left:46.7px;top:392px;font-size:11px;line-height:11px;letter-spacing:-0.373px;">System</div>
<div class="t" style="left:65.2px;top:410px;font-size:11px;line-height:11px;letter-spacing:-0.520px;">ACMP Update</div>
<div class="t" style="left:65.2px;top:428px;font-size:11px;line-height:11px;letter-spacing:-0.176px;">Verteilte File Repositories</div>
<div class="t" style="left:65.2px;top:446px;font-size:11px;line-height:11px;letter-spacing:-0.600px;">ACMP Lizenzen</div>
<div class="t" style="left:64.7px;top:464px;font-size:11px;line-height:11px;letter-spacing:-0.204px;">Sperren</div>
<div class="t" style="left:64.3px;top:482px;font-size:11px;line-height:11px;letter-spacing:-0.129px;">Mandanten</div>
<div class="t" style="left:65.2px;top:500px;font-size:11px;line-height:11px;letter-spacing:-0.484px;">ACMP Gateway</div>
<div class="t" style="left:64.3px;top:518px;font-size:11px;line-height:11px;letter-spacing:-0.220px;">Einstellungen</div>
<div class="t" style="left:64.3px;top:536px;font-size:11px;line-height:11px;letter-spacing:0.005px;">Benutzerverwaltung</div>
<div class="t" style="left:244.7px;top:172px;font-size:11px;line-height:11px;letter-spacing:-0.147px;">System / Einstellungen</div>
<div class="t" style="left:260.8px;top:195px;font-size:11px;line-height:11px;letter-spacing:-0.260px;color:#6d6d6d;">Suchen</div>
<div class="t" style="left:290.3px;top:224px;font-size:11px;line-height:11px;letter-spacing:-0.431px;">ACMP Agent</div>
<div class="t" style="left:290.3px;top:242px;font-size:11px;line-height:11px;letter-spacing:-0.574px;">ACMP Server</div>
<div class="t" style="left:290.3px;top:260px;font-size:11px;line-height:11px;letter-spacing:-0.259px;">Asset Management</div>
<div class="t" style="left:289.4px;top:278px;font-size:11px;line-height:11px;letter-spacing:-0.152px;">Defender Management</div>
<div class="t" style="left:289.7px;top:296px;font-size:11px;line-height:11px;letter-spacing:-0.419px;">Client Commands</div>
<div class="t" style="left:289.4px;top:314px;font-size:11px;line-height:11px;letter-spacing:-0.097px;">Benutzerdefinierte Felder</div>
<div class="t" style="left:289.4px;top:332px;font-size:11px;line-height:11px;letter-spacing:-0.439px;">Helpdesk</div>
<div class="t" style="left:290.3px;top:350px;font-size:11px;line-height:11px;letter-spacing:-0.339px;">Anhänge</div>
<div class="t" style="left:289.4px;top:368px;font-size:11px;line-height:11px;letter-spacing:-0.527px;">E-Mail</div>
<div class="t" style="left:289.4px;top:386px;font-size:11px;line-height:11px;letter-spacing:-0.202px;">E-Mail Vorlagen für Eskalationen</div>
<div class="t" style="left:289.4px;top:404px;font-size:11px;line-height:11px;letter-spacing:-0.271px;">Eskalationen</div>
<div class="t" style="left:289.3px;top:422px;font-size:11px;line-height:11px;letter-spacing:-0.115px;">Interne E-Mail Vorlagen</div>
<div class="t" style="left:289.4px;top:440px;font-size:11px;line-height:11px;letter-spacing:-0.111px;">Kategorien</div>
<div class="t" style="left:289.4px;top:458px;font-size:11px;line-height:11px;letter-spacing:-0.234px;">KB-Artikel drucken</div>
<div class="t" style="left:289.4px;top:476px;font-size:11px;line-height:11px;letter-spacing:-0.223px;">Kontakt E-Mail Vorlagen</div>
<div class="t" style="left:289.4px;top:494px;font-size:11px;line-height:11px;letter-spacing:-0.359px;">Lösungen</div>
<div class="t" style="left:289.4px;top:512px;font-size:11px;line-height:11px;letter-spacing:-0.089px;">Rechtschreibprüfung</div>
<div class="t" style="left:289.4px;top:530px;font-size:11px;line-height:11px;letter-spacing:-0.369px;">Regeln</div>
<div class="t" style="left:290.1px;top:548px;font-size:11px;line-height:11px;letter-spacing:0.029px;">Textbausteine</div>
<div class="t" style="left:290.1px;top:566px;font-size:11px;line-height:11px;letter-spacing:-0.138px;">Ticketfelder</div>
<div class="t" style="left:290.1px;top:584px;font-size:11px;line-height:11px;letter-spacing:-0.212px;">Tickets drucken</div>
<div class="t" style="left:290.0px;top:602px;font-size:11px;line-height:11px;letter-spacing:-0.058px;">Zeiterfassung</div>
<div class="t" style="left:289.3px;top:620px;font-size:11px;line-height:11px;letter-spacing:-0.054px;">Intune Management</div>
<div class="t" style="left:289.4px;top:638px;font-size:11px;line-height:11px;letter-spacing:-0.336px;">Lizenzmanagement</div>
<div class="t" style="left:289.4px;top:656px;font-size:11px;line-height:11px;letter-spacing:-0.097px;">Managed Software</div>
<div class="t" style="left:289.8px;top:674px;font-size:11px;line-height:11px;letter-spacing:-0.240px;">Stammdaten</div>
<div class="t" style="left:289.8px;top:692px;font-size:11px;line-height:11px;letter-spacing:-0.363px;">OS Deployment</div>
<div class="t" style="left:289.5px;top:710px;font-size:11px;line-height:11px;letter-spacing:-0.267px;">Unix Scripts</div>
<div class="t" style="left:290.3px;top:728px;font-size:11px;line-height:11px;letter-spacing:0.046px;">Web Interface</div>
<div class="t" style="left:290.3px;top:746px;font-size:11px;line-height:11px;letter-spacing:-0.212px;">Windows Update Management</div>
<div class="t" style="left:556.7px;top:211px;font-size:17px;line-height:17px;letter-spacing:-0.315px;">Sprache der Vorlage</div>
<div class="t" style="left:514.8px;top:248px;font-size:11px;line-height:11px;letter-spacing:-0.176px;">Diese Sprache wird für die Werte der ACMP Helpdesk Variablen</div>
<div class="t" style="left:515.0px;top:261px;font-size:11px;line-height:11px;letter-spacing:-0.156px;">in den Eskalations-und Benachrichtigungs-E-Mails verwendet.</div>
<div class="t" style="left:515.2px;top:283px;font-size:11px;line-height:11px;letter-spacing:-0.211px;">Sprache der E-Mail Vorlage:</div>
<div class="t" style="left:690.6px;top:284px;font-size:11px;line-height:11px;letter-spacing:-0.452px;">Englisch</div>
<div class="t" style="left:556.9px;top:326px;font-size:17px;line-height:17px;letter-spacing:-0.057px;">Verhalten von wartenden Tickets</div>
<div class="t" style="left:515.5px;top:363px;font-size:11px;line-height:11px;letter-spacing:-0.063px;">Tickets mit dem Status "Wartend" können automatisch den Status ändern, wenn eine neue E-Mail eintrifft und als externer Kommentar hinzugefügt wird.</div>
<div class="t" style="left:531.8px;top:396px;font-size:11px;line-height:11px;letter-spacing:-0.043px;">Ticket Status von wartenden Tickets automatisch ändern, wenn eine neue E-Mail eintrifft.</div>
<div class="t" style="left:544.1px;top:420px;font-size:11px;line-height:11px;letter-spacing:0.058px;color:#a0a0a0;">Neuer Ticketstatus:</div>
<div class="t" style="left:556.6px;top:463px;font-size:17px;line-height:17px;letter-spacing:-0.141px;">Standard Schriftart / Größe</div>
<div class="t" style="left:514.8px;top:500px;font-size:11px;line-height:11px;letter-spacing:-0.143px;">Mittels dieser Einstellung können Sie die Standard Schriftart / Größe für alle Kommentare im Helpdesk festlegen.</div>
<div class="t" style="left:520.0px;top:527px;font-size:13px;line-height:13px;letter-spacing:-0.032px;">Tahoma</div>
<div class="t" style="left:834.5px;top:528px;font-size:11px;line-height:11px;">8</div>
<div class="t" style="left:557.1px;top:571px;font-size:17px;line-height:17px;letter-spacing:-0.339px;">E-Mail Signatur</div>
<div class="t" style="left:518.6px;top:612px;font-size:11px;line-height:11px;letter-spacing:-0.419px;">Tahoma</div>
<div class="t" style="left:692.5px;top:612px;font-size:11px;line-height:11px;">8</div>
<div class="t" style="left:1122.6px;top:612px;font-size:11px;line-height:11px;letter-spacing:-0.116px;">Keine Rechtschreibprüfung</div>
<div class="t" style="left:556.4px;top:747px;font-size:17px;line-height:17px;letter-spacing:-0.350px;">Maximal Größe des Anhangs</div>
<div class="t" style="left:515.8px;top:784px;font-size:11px;line-height:11px;letter-spacing:-0.096px;">Anhänge, die größer sind als der angegebene Wert, werden bei eingehenden E-Mails nicht automatisch hinzugefügt.</div>
<div class="t" style="left:514.9px;top:806px;font-size:11px;line-height:11px;letter-spacing:-0.077px;">Maximale Dateigröße für Anhänge:</div>
<div class="t" style="left:691.2px;top:806px;font-size:11px;line-height:11px;">5</div>
<div class="t" style="left:777.6px;top:807px;font-size:11px;line-height:11px;letter-spacing:-0.600px;">MiB</div>
<div class="t" style="left:554.6px;top:849px;font-size:17px;line-height:17px;letter-spacing:-0.403px;">Ausgeschlossene Endungen von Anhängen</div>
<div class="t" style="left:512.7px;top:886px;font-size:11px;line-height:11px;letter-spacing:-0.143px;">Alle Anhänge mit einer dieser Endungen werden NICHT hinzugefügt.</div>
<div class="t" style="left:511.8px;top:899px;font-size:11px;line-height:11px;letter-spacing:-0.103px;">Mehrere Endungen werden durch einen Zeilenumbruch getrennt.</div>
<div class="t" style="left:511.8px;top:912px;font-size:11px;line-height:11px;letter-spacing:-0.234px;">Beispiel:</div>
<div class="t" style="left:512.2px;top:925px;font-size:11px;line-height:11px;letter-spacing:-0.247px;">exe</div>
<div class="t" style="left:512.3px;top:938px;font-size:11px;line-height:11px;letter-spacing:-0.427px;">zip</div>
<div class="t" style="left:518.9px;top:451px;font-size:43px;line-height:43px;color:#555;font-family:'Liberation Serif';">A</div>
<div class="t" style="left:796.1px;top:609px;font-size:19px;line-height:19px;font-weight:bold;color:#555;transform:scaleX(.86);transform-origin:0 0;">B</div>
<div class="t" style="left:828.7px;top:609px;font-size:17.5px;line-height:17.5px;font-style:italic;color:#555;font-family:'Liberation Serif';">I</div>
<div class="t" style="left:852.9px;top:607px;font-size:20.5px;line-height:20.5px;color:#555;font-family:'Liberation Serif';transform:scaleX(.84);transform-origin:0 0;">U</div>
<div class="t" style="left:879.0px;top:605px;font-size:23.5px;line-height:23.5px;color:#555;font-family:'Liberation Serif';">S</div>
</body>
</html>
